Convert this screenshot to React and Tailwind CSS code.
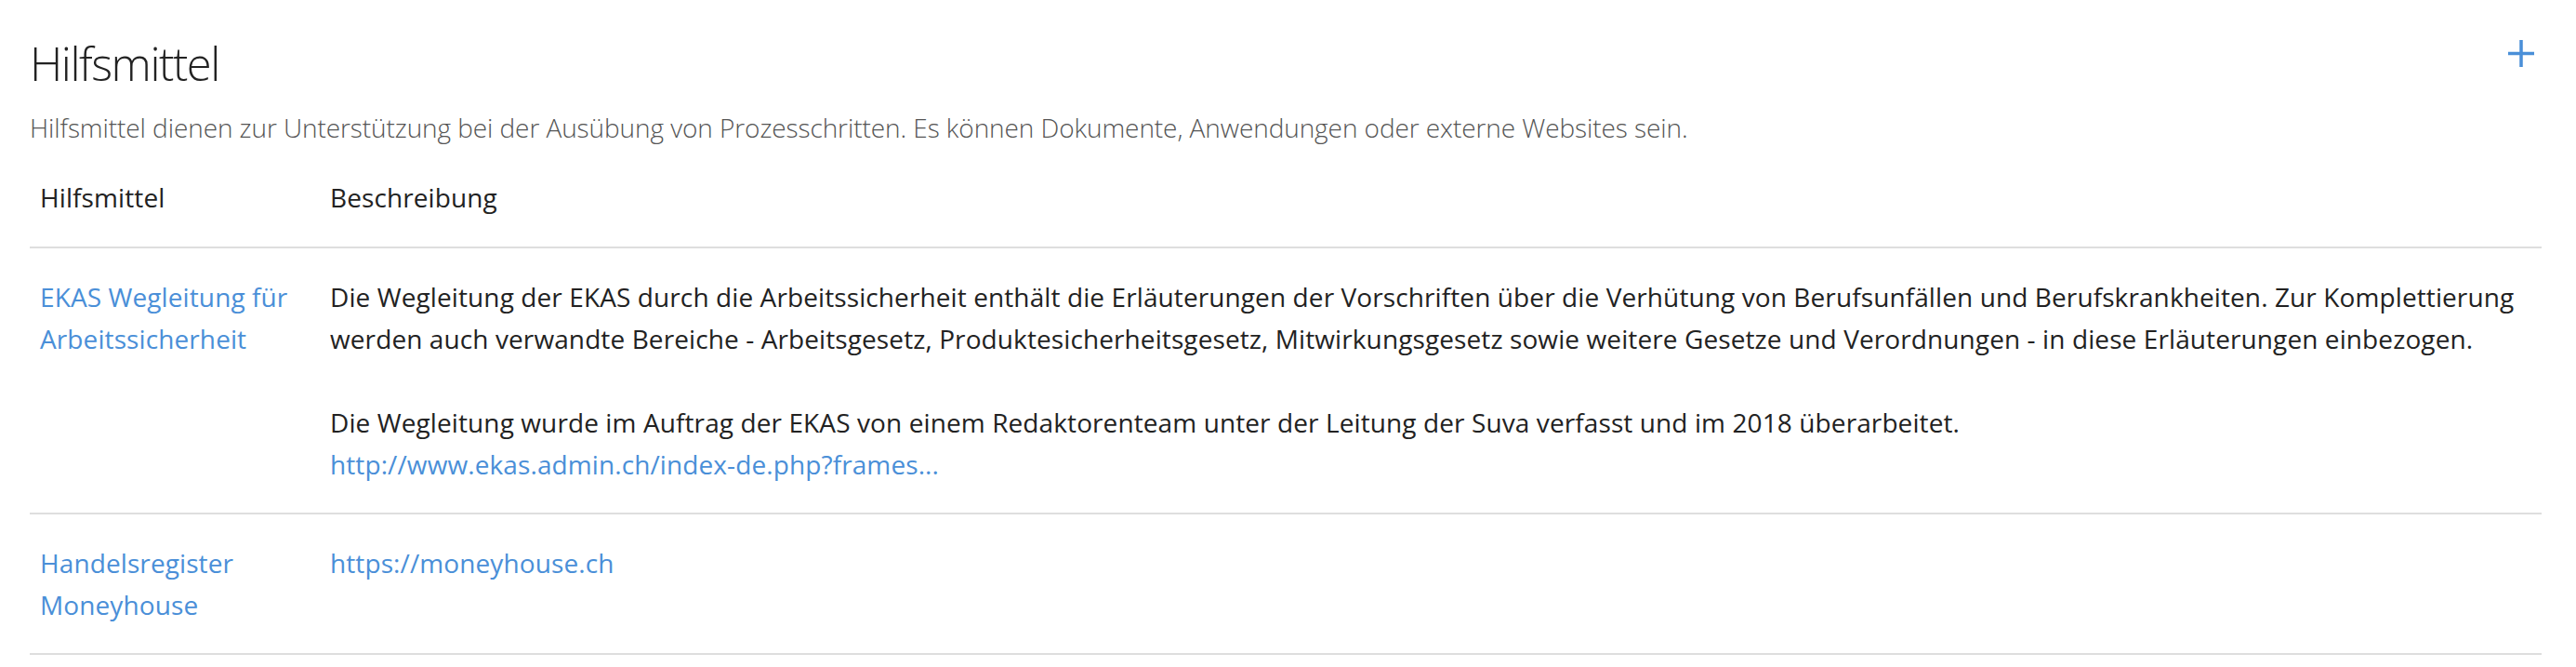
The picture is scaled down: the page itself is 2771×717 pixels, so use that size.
import { Fragment } from 'react';

const rows = [
    {
        name: ['EKAS Wegleitung für', 'Arbeitssicherheit'],
        paragraphs: [
            [
                'Die Wegleitung der EKAS durch die Arbeitssicherheit enthält die Erläuterungen der Vorschriften über die Verhütung von Berufsunfällen und Berufskrankheiten. Zur Komplettierung',
                'werden auch verwandte Bereiche - Arbeitsgesetz, Produktesicherheitsgesetz, Mitwirkungsgesetz sowie weitere Gesetze und Verordnungen - in diese Erläuterungen einbezogen.',
            ],
            ['Die Wegleitung wurde im Auftrag der EKAS von einem Redaktorenteam unter der Leitung der Suva verfasst und im 2018 überarbeitet.'],
        ],
        link: 'http://www.ekas.admin.ch/index-de.php?frames...',
    },
    {
        name: ['Handelsregister', 'Moneyhouse'],
        paragraphs: [],
        link: 'https://moneyhouse.ch',
    },
];

function Lines({ lines }) {
    return lines.map((line, i) => (
        <Fragment key={i}>
            {i > 0 && <br />}
            {line}
        </Fragment>
    ));
}

export default function App() {
    return (
        <div className="min-h-screen bg-white pl-8 pr-[37px] pt-[38px] font-['Open_Sans','Noto_Sans',sans-serif] text-[#222]">
            <div className="flex items-start justify-between">
                <h2 className="text-[49px] font-light leading-[60px] tracking-[-0.03em] text-[#222]">Hilfsmittel</h2>
                <button type="button" className="mr-2 mt-[5px] text-[#4a8fd8]" aria-label="Hinzufügen">
                    <svg width="28" height="29" viewBox="0 0 28 29" className="block">
                        <path d="M0 14.5H28M14 0V29" stroke="currentColor" strokeWidth="3.5" />
                    </svg>
                </button>
            </div>

            <p className="mt-[17px] text-[28px] font-light leading-[45px] tracking-[-0.08px] text-[#555]">
                Hilfsmittel dienen zur Unterstützung bei der Ausübung von Prozesschritten. Es können Dokumente, Anwendungen oder externe Websites sein.
            </p>

            <div className="text-[28px] leading-[45px] tracking-[0.1px]">
                <div className="grid grid-cols-[312px_1fr] border-b-2 border-[#dedede]">
                    <div className="px-[11px] py-[30px]">Hilfsmittel</div>
                    <div className="px-[11px] py-[30px]">Beschreibung</div>
                </div>

                {rows.map((row) => (
                    <div key={row.link} className="grid grid-cols-[312px_1fr] border-b-2 border-[#dedede]">
                        <div className="whitespace-nowrap px-[11px] pb-[29px] pt-[30px]">
                            <a href="#" className="text-[#4a8fd8]">
                                <Lines lines={row.name} />
                            </a>
                        </div>
                        <div className="whitespace-nowrap px-[11px] pb-[29px] pt-[30px]">
                            {row.paragraphs.map((p, i) => (
                                <p key={i} className="mb-[45px]">
                                    <Lines lines={p} />
                                </p>
                            ))}
                            <a href="#" className="-mt-[45px] block text-[#4a8fd8] first:mt-0">
                                {row.link}
                            </a>
                        </div>
                    </div>
                ))}
            </div>
        </div>
    );
}
